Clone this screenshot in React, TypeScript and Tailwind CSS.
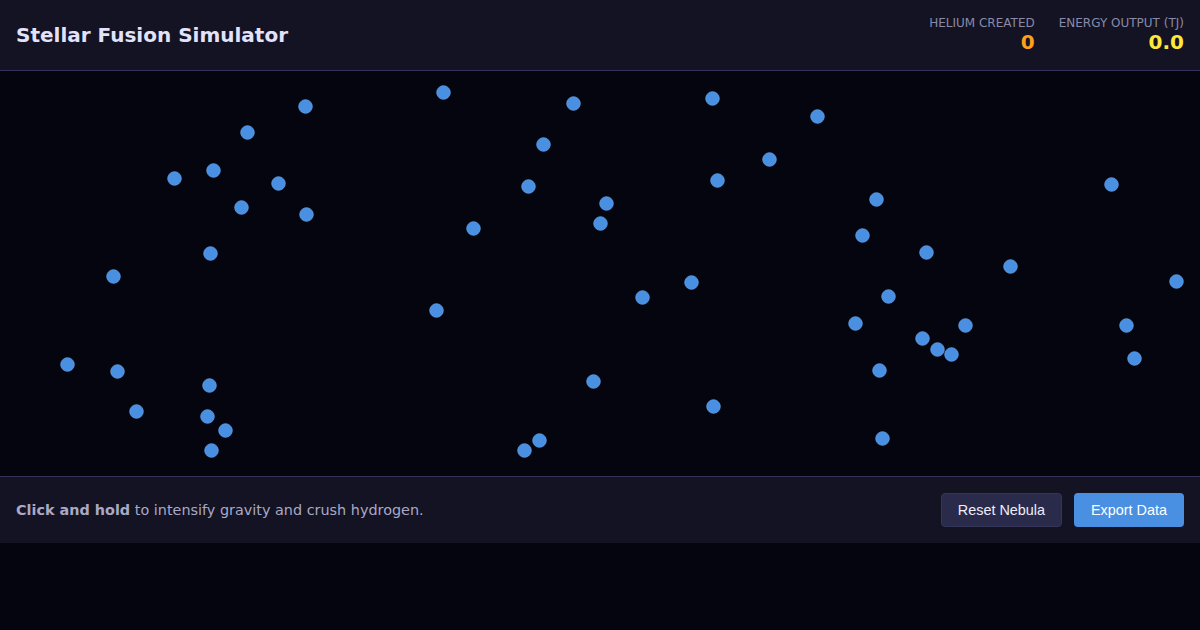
const particles: [number, number][] = [
  [305, 106], [443, 92], [573, 103], [712, 98], [817, 116], [247, 132], [543, 144],
  [174, 178], [213, 170], [278, 183], [241, 207], [306, 214], [528, 186], [606, 203],
  [600, 223], [717, 180], [769, 159], [876, 199], [862, 235], [926, 252], [1111, 184],
  [1010, 266], [1176, 281], [210, 253], [113, 276], [473, 228], [436, 310], [642, 297],
  [691, 282], [888, 296], [855, 323], [965, 325], [922, 338], [937, 349], [951, 354],
  [1126, 325], [1134, 358], [67, 364], [117, 371], [209, 385], [136, 411], [207, 416],
  [225, 430], [211, 450], [593, 381], [713, 406], [879, 370], [539, 440], [524, 450],
  [882, 438],
];

const Stat = ({ label, value, color }: { label: string; value: string; color: string }) => (
  <div className="flex flex-col items-end -mt-0.5">
    <span className="text-[12px] leading-[16px] uppercase text-[#8a8aa8]">{label}</span>
    <span className={`text-[20px] leading-[22px] font-bold ${color}`}>{value}</span>
  </div>
);

export default function App() {
  return (
    <div className="min-h-[630px] bg-[#05050f] font-['DejaVu_Sans',sans-serif]">
      <header className="h-[71px] flex items-center justify-between px-4 bg-[#131324] border-b border-[#33335a]">
        <h1 className="text-[20px] font-bold text-[#e2e2fa]">Stellar Fusion Simulator</h1>
        <div className="flex items-center gap-6">
          <Stat label="Helium Created" value="0" color="text-[#ff9f1c]" />
          <Stat label="Energy Output (TJ)" value="0.0" color="text-[#ffe83b]" />
        </div>
      </header>

      <div className="h-[405px] bg-[#05050f]">
        <svg width="1200" height="405" className="block">
          {particles.map(([x, y], i) => (
            <circle key={i} cx={x + 0.5} cy={y - 70.5} r={6.8} fill="#4a90e2" stroke="#5f9ee8" strokeWidth={0.8} />
          ))}
        </svg>
      </div>

      <footer className="h-[67px] flex items-center justify-between px-4 bg-[#131324] border-t border-[#33335a]">
        <p className="pt-0.5 text-[14.4px] text-[#a9a9c6]">
          <span className="font-bold">Click and hold</span> to intensify gravity and crush hydrogen.
        </p>
        <div className="flex items-center gap-3 font-['Liberation_Sans',sans-serif] text-[14.4px]">
          <button type="button" className="h-[34px] pt-px px-4 rounded bg-[#2a2a4a] border border-[#35355a] text-[#eeeefa]">
            Reset Nebula
          </button>
          <button type="button" className="h-[34px] pt-px px-[17px] rounded bg-[#4a90e2] text-white">
            Export Data
          </button>
        </div>
      </footer>
    </div>
  );
}
